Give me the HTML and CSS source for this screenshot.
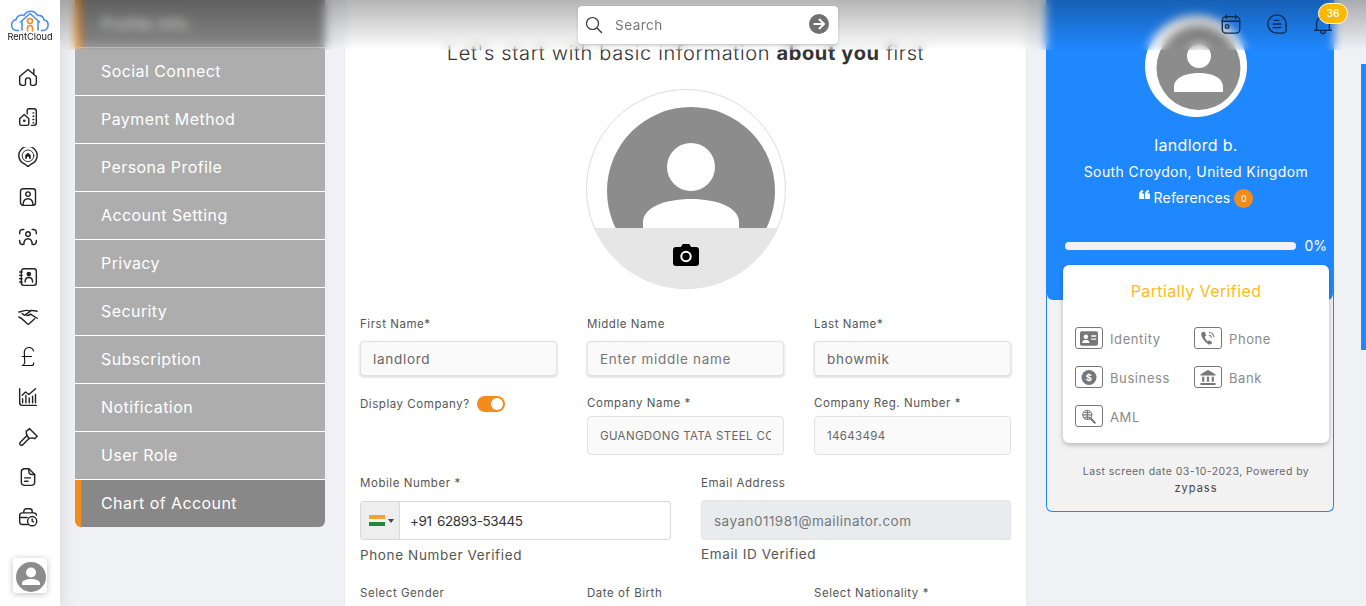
FILE: index.html
```html
<!DOCTYPE html>
<html lang="en">
<head>
<meta charset="utf-8">
<title>RentCloud - Profile</title>
<link rel="stylesheet" href="styles.css">
</head>
<body>
<div class="app">
  <nav class="rail">
    <div class="logo">
      <svg class="logo-mark" viewBox="0 0 40 24"><path class="lg-cloud" d="M9 22H7a5.500 5.500 0 0 1-1-10.900A6 6 0 0 1 14 7a7.500 7.500 0 0 1 13.500 0A6 6 0 0 1 34 11.200 5.500 5.500 0 0 1 33 22h-2"/><path class="lg-cloud" d="M10 14 20 5l10 9M12 13v9M28 13v9"/><circle class="lg-on" cx="20" cy="12.500" r="2.500"/><path class="lg-on" d="M17.500 23v-3.500a2.500 2.500 0 0 1 5 0V23"/></svg>
      <span class="logo-text">RentCloud</span>
    </div>
    <ul class="rail-icons">
      <li><svg class="ico" viewBox="0 0 24 24"><path d="M5 22h2.500a1.500 1.500 0 0 0 1.500-1.500V16a3 3 0 0 1 6 0v4.500a1.500 1.500 0 0 0 1.500 1.500H19a3 3 0 0 0 3-3v-7.500L12 3 2 11.500V19a3 3 0 0 0 3 3zM19 8V2.500"/></svg></li>
      <li><svg class="ico" viewBox="0 0 24 24"><path d="M11 8V4a2 2 0 0 1 2-2h6a3 3 0 0 1 3 3v14a3 3 0 0 1-3 3h-3M18 7h1M18 11h1M18 15h1M18 19h1"/><path d="M2 14l5.500-5 5.500 5v6a2 2 0 0 1-2 2H4a2 2 0 0 1-2-2z"/><circle class="fill" cx="7.500" cy="16.500" r="1.600"/></svg></li>
      <li><svg class="ico" viewBox="0 0 24 24"><path d="M12 23.500l-3.500-2.800A11 11 0 1 1 15.500 20.700z"/><circle class="thin" cx="12" cy="10.500" r="7"/><path class="fill" d="M12 6.800l3.300 2.900V14h-2.100v-2.300h-2.400V14H8.700V9.700z"/></svg></li>
      <li><svg class="ico" viewBox="0 0 24 24"><rect x="3" y="2" width="18" height="20" rx="3"/><circle cx="12" cy="8.500" r="2.700"/><path d="M6 22c0-5 2.500-8 6-8s6 3 6 8"/></svg></li>
      <li><svg class="ico" viewBox="0 0 24 24"><path d="M2 8V6.500A3.500 3.500 0 0 1 5.500 3H7M17 3h1.500A3.500 3.500 0 0 1 22 6.500V8M2 16v1.500A3.500 3.500 0 0 0 5.500 21H6M18 21h.5a3.500 3.500 0 0 0 3.500-3.500V16"/><circle cx="12" cy="8.500" r="2.800"/><path d="M7 21c0-4.500 2-7 5-7s5 2.500 5 7"/></svg></li>
      <li><svg class="ico" viewBox="0 0 24 24"><rect x="4" y="2" width="18" height="20" rx="3"/><path d="M2 6h3M2 10h3M2 14h3M2 18h3"/><circle class="fill" cx="13" cy="8.500" r="2.800"/><path d="M8.500 18c0-3.500 2-5.500 4.500-5.500s4.500 2 4.500 5.500" /></svg></li>
      <li><svg class="ico" viewBox="0 0 24 24"><path d="M1 6c4 0 5-2 9-2 2 0 3 0 5 1l-6 4c1.500 1.500 3.500 1.500 6-.5l8 5M23 5c-3 0-4-1-8-1"/><path d="M1 12c3 1 5 3 7 5l3 3c.8.800 1.600.800 2.400 0L20 14"/><path d="M5 8l3 2"/></svg></li>
      <li class="pound">£</li>
      <li><svg class="ico" viewBox="0 0 24 24"><path d="M2 2v17a3 3 0 0 0 3 3h17"/><path d="M5.500 19v-5M9.500 19v-9M13.500 19v-6M17.500 19v-8M21 19v-10"/><path d="M5 10l4-4 4 3 8-7"/></svg></li>
      <li><svg class="ico" viewBox="0 0 24 24"><path d="M10 5l4-3 9 9-3 3-3-1-4 1-3-6z"/><path d="M10.500 10.500 2.500 18.500a2 2 0 0 0 0 2.500l.5.500a2 2 0 0 0 2.500 0l8-8"/></svg></li>
      <li><svg class="ico" viewBox="0 0 24 24"><path d="M13 2H8a4 4 0 0 0-4 4v12a4 4 0 0 0 4 4h8a4 4 0 0 0 4-4V9z"/><path d="M13 2v3a4 4 0 0 0 4 4h3M8 13h7M8 17h4"/></svg></li>
      <li><svg class="ico" viewBox="0 0 24 24"><path d="M12 21H5a3 3 0 0 1-3-3V10a3 3 0 0 1 3-3h14a3 3 0 0 1 3 3M7 7V5a3 3 0 0 1 3-3h4a3 3 0 0 1 3 3v2M2 12.500h9"/><circle cx="17" cy="17" r="5.500"/><path d="M17 14.500V17l1.800 1"/></svg></li>
    </ul>
    <div class="rail-user">
      <svg class="user-svg" viewBox="0 0 30 30"><circle class="u-bg" cx="15" cy="15" r="15"/><circle class="u-fg" cx="15" cy="10.500" r="5"/><path class="u-fg" d="M6 23v-1.500c0-3 4-4.500 9-4.500s9 1.500 9 4.500V23z"/></svg>
    </div>
  </nav>

  <div class="workspace">
    <aside class="menu">
      <a class="menu-item is-active">Profile Info</a>
      <a class="menu-item">Social Connect</a>
      <a class="menu-item">Payment Method</a>
      <a class="menu-item">Persona Profile</a>
      <a class="menu-item">Account Setting</a>
      <a class="menu-item">Privacy</a>
      <a class="menu-item">Security</a>
      <a class="menu-item">Subscription</a>
      <a class="menu-item">Notification</a>
      <a class="menu-item">User Role</a>
      <a class="menu-item is-active is-last">Chart of Account</a>
    </aside>

    <main class="card">
      <h2 class="intro">Let's start with basic information <b>about you</b> first</h2>
      <div class="photo">
        <svg class="photo-svg" viewBox="0 0 168 168"><circle class="p-bg" cx="84" cy="84" r="84"/><circle class="p-fg" cx="84" cy="60" r="24"/><path class="p-fg" d="M36 122v-7c0-14 21-23 48-23s48 9 48 23v7z"/></svg>
        <div class="photo-bar">
          <svg class="camera" viewBox="0 0 26 22"><path d="M8 3l1-2a1.500 1.500 0 0 1 1.300-1h5.400A1.500 1.500 0 0 1 17 1l1 2h5a3 3 0 0 1 3 3v13a3 3 0 0 1-3 3H3a3 3 0 0 1-3-3V6a3 3 0 0 1 3-3z"/><circle class="cam-ring" cx="13" cy="12.500" r="4.700"/></svg>
        </div>
      </div>

      <div class="row three r1">
        <div class="field"><label class="lbl">First Name*</label><input class="inp raised" value="landlord" readonly></div>
        <div class="field"><label class="lbl">Middle Name</label><input class="inp raised" placeholder="Enter middle name" readonly></div>
        <div class="field"><label class="lbl">Last Name*</label><input class="inp raised" value="bhowmik" readonly></div>
      </div>

      <div class="row three r2">
        <div class="field toggle-field"><label class="lbl">Display Company?</label><span class="toggle"><span class="knob"></span></span></div>
        <div class="field"><label class="lbl">Company Name *</label><input class="inp tall small" value="GUANGDONG TATA STEEL COMPANY" readonly></div>
        <div class="field"><label class="lbl">Company Reg. Number *</label><input class="inp tall small" value="14643494" readonly></div>
      </div>

      <div class="row two r3">
        <div class="field">
          <label class="lbl">Mobile Number *</label>
          <div class="phone">
            <span class="dial"><span class="flag"><i class="f-o"></i><i class="f-w"></i><i class="f-g"></i></span><span class="caret"></span></span>
            <span class="phone-num">+91 62893-53445</span>
          </div>
          <p class="verified">Phone Number Verified</p>
        </div>
        <div class="field">
          <label class="lbl">Email Address</label>
          <div class="email">sayan011981@mailinator.com</div>
          <p class="verified email-note">Email ID Verified</p>
        </div>
      </div>

      <div class="row three r4">
        <div class="field"><label class="lbl">Select Gender</label></div>
        <div class="field"><label class="lbl">Date of Birth</label></div>
        <div class="field"><label class="lbl">Select Nationality *</label></div>
      </div>
    </main>

    <aside class="panel">
      <div class="panel-head">
        <svg class="panel-avatar" viewBox="0 0 102 102"><circle class="pa-ring" cx="51" cy="51" r="51"/><circle class="p-bg" cx="53.500" cy="53" r="42"/><circle class="p-fg" cx="54" cy="41" r="12"/><path class="p-fg" d="M29 77v-5c0-9 11-14 25-14s24 5 24 14v5z"/></svg>
        <div class="p-name">landlord b.</div>
        <div class="p-loc">South Croydon, United Kingdom</div>
        <div class="p-ref">
          <svg class="quote" viewBox="0 0 12 10"><path d="M0 10V5c0-3 1.500-4.500 4.500-5v2C3.500 2.300 3 3 3 4h2.500v6zM6.500 10V5c0-3 1.500-4.500 4.500-5v2c-1 .3-1.500 1-1.500 2H12v6z"/></svg>
          <span>References</span><span class="ref-count">0</span>
        </div>
        <div class="progress"><span class="bar"></span><span class="pct">0%</span></div>
      </div>
      <section class="verify">
        <h3 class="verify-title">Partially Verified</h3>
        <div class="verify-grid">
          <div class="v-item"><span class="v-box"><svg class="v-ico" viewBox="0 0 20 16"><path d="M2 0h16a2 2 0 0 1 2 2v12a2 2 0 0 1-2 2H2a2 2 0 0 1-2-2V2a2 2 0 0 1 2-2z"/><circle class="v-w" cx="6.500" cy="6" r="2.500"/><path class="v-w" d="M2.500 13c0-2.500 2-3.500 4-3.500s4 1 4 3.500zM12.500 4.500H18V6h-5.500zM12.500 8H18v1.500h-5.500z"/></svg></span><span class="v-label">Identity</span></div>
          <div class="v-item"><span class="v-box"><svg class="v-ico" viewBox="0 0 20 18"><path d="M4.500 1 2 2.500C1 6 5 13 11.500 16.500l3-1.500.5-1.500-3.500-2.500-2 1.500C8 11 6.500 9 6 7l2-1.500L6 1z"/><path class="v-line" d="M11 1.500a6 6 0 0 1 6 6M11 5a3 3 0 0 1 3 3"/></svg></span><span class="v-label">Phone</span></div>
          <div class="v-item"><span class="v-box"><svg class="v-ico" viewBox="0 0 16 16"><circle cx="8" cy="8" r="8"/><text class="v-dollar" x="8" y="11.500" text-anchor="middle">$</text></svg></span><span class="v-label">Business</span></div>
          <div class="v-item"><span class="v-box"><svg class="v-ico" viewBox="0 0 20 18"><path d="M10 0l9 5v1.500H1V5zM3 8h2.500v6H3zM8.700 8h2.600v6H8.700zM14.500 8H17v6h-2.500zM1 15.500h18V18H1z"/></svg></span><span class="v-label">Bank</span></div>
          <div class="v-item"><span class="v-box"><svg class="v-ico" viewBox="0 0 20 18"><circle class="v-line" cx="8" cy="7" r="5.500"/><path class="v-line" d="M2.500 7h11M8 1.500v11M4.500 3.500c2.500 1.500 4.500 1.500 7 0M4.500 10.500c2.500-1.500 4.500-1.500 7 0"/><path class="v-thick" d="M12 11.500l5 5"/></svg></span><span class="v-label">AML</span></div>
        </div>
      </section>
      <footer class="panel-foot">
        <p class="foot-line">Last screen date 03-10-2023, Powered by</p>
        <p class="foot-brand">zypass</p>
      </footer>
    </aside>
  </div>

  <header class="topbar">
    <div class="search">
      <svg class="s-ico" viewBox="0 0 18 18"><circle cx="7.500" cy="7.500" r="6"/><path d="M12 12l5 5"/></svg>
      <span class="s-text">Search</span>
      <svg class="s-go" viewBox="0 0 20 20"><circle cx="10" cy="10" r="10"/><path d="M4.500 10h10M10 5l5 5-5 5"/></svg>
    </div>
    <div class="top-icons">
      <svg class="t-ico" viewBox="0 0 24 24"><rect x="2.500" y="4" width="19" height="18" rx="4"/><path d="M7 2v4M17 2v4M2.500 9h19"/><rect x="6" y="13" width="3.500" height="3.500" rx=".8"/></svg>
      <svg class="t-ico" viewBox="0 0 24 24"><path d="M12 2a10 10 0 1 0 0 20h6a4 4 0 0 0 4-4v-6A10 10 0 0 0 12 2z"/><path d="M9 8h5M8 12h8M8 16h8"/></svg>
      <span class="bell">
        <svg class="t-ico" viewBox="0 0 24 24"><path d="M5 18V11a7 7 0 0 1 14 0v7l2 1H3zM9.500 20a2.500 2.500 0 0 0 5 0"/></svg>
        <span class="badge">36</span>
      </span>
    </div>
  </header>
  <span class="thumb"></span>
</div>
</body>
</html>
```

FILE: styles.css
```css
* { box-sizing: border-box; }
html, body { margin: 0; height: 100%; overflow: hidden; }
body { font-family: Inter, "Open Sans", sans-serif; background: #eff1f5; color: #555; }
p, h2, h3, ul { margin: 0; padding: 0; }
ul { list-style: none; }

.app { position: relative; display: flex; width: 1366px; height: 606px; overflow: hidden; }

/* left rail */
.rail { position: relative; z-index: 3; flex: 0 0 60px; display: flex; flex-direction: column; background: #fff; box-shadow: 4px 0 14px rgba(0,0,0,.08); }
.logo { height: 67px; padding-top: 8px; width: 60px; display: flex; flex-direction: column; align-items: center; }
.logo-mark { width: 40px; height: 25px; }
.lg-cloud { fill: none; stroke: #4a8df0; stroke-width: 1.6; }
.lg-on { fill: none; stroke: #f28c1c; stroke-width: 1.6; }
.logo-text { font-size: 9.200px; line-height: 10px; color: #111; margin-top: -1px; }
.rail-icons { display: flex; flex-direction: column; gap: 20px; padding-left: 18px; }
.rail-icons li { width: 20px; height: 20px; }
.ico { display: block; width: 20px; height: 20px; fill: none; stroke: #222; stroke-width: 1.700; stroke-linecap: round; stroke-linejoin: round; }
.ico .fill { fill: #222; stroke: none; }
.ico .thin { stroke-width: 1.100; }
.pound { font-size: 26px; font-weight: 200; line-height: 20px; text-align: center; color: #111; }
.rail-user { margin: auto 0 13px 13px; width: 34px; height: 35px; background: #fff; border-radius: 3px; box-shadow: 0 1px 6px rgba(0,0,0,.25); padding: 4px 0 0 3px; }
.user-svg { display: block; width: 30px; height: 30px; }
.u-bg { fill: #8c8c8c; }
.u-fg { fill: #fff; }

/* workspace */
.workspace { flex: 1; display: flex; align-items: flex-start; gap: 20px; padding-left: 15px; }

.menu { flex: 0 0 250px; display: flex; flex-direction: column; }
.menu-item { display: flex; align-items: center; height: 48px; padding: 0 0 1px 26px; font-size: 16px; letter-spacing: .42px; color: #fff; background: #adadad; border-bottom: 1px solid #fff; }
.menu-item.is-active { background: #888; border-left: 6px solid #f28c1c; padding-left: 20px; }
.menu-item.is-last { height: 47px; border-bottom: 0; border-radius: 0 0 6px 6px; }

.card { flex: 0 0 681px; height: 606px; padding: 41px 15px 0; background: #fff; box-shadow: 0 0 0 1px #e8eaee; }
.intro { font-size: 20px; line-height: 24px; font-weight: 300; text-align: center; color: #333; letter-spacing: .65px; white-space: nowrap; }
.intro b { font-weight: 700; }

.photo { position: relative; width: 200px; height: 200px; margin: 24px 0 28px 226px; border: 1px solid #ddd; border-radius: 50%; overflow: hidden; background: #fff; }
.photo-svg { display: block; width: 168px; height: 168px; margin: 17px 0 0 20px; }
.p-bg { fill: #8c8c8c; }
.p-fg { fill: #fff; }
.photo-bar { position: absolute; left: 0; right: 0; bottom: 0; height: 60px; background: #e6e6e6; }
.camera { position: absolute; left: 86px; top: 16px; width: 26px; height: 22px; fill: #000; }
.cam-ring { fill: #000; stroke: #fff; stroke-width: 2; }

.row { display: grid; column-gap: 30px; }
.three { grid-template-columns: repeat(3, 197px); }
.two { grid-template-columns: 311px 310px; }
.r2 { margin-top: 20px; }
.r3 { margin-top: 21px; }
.r4 { margin-top: 23px; }
.field { display: flex; flex-direction: column; }
.lbl { display: block; font-size: 11.500px; line-height: 14px; color: #555; letter-spacing: .55px; white-space: nowrap; }
.inp { display: block; width: 100%; font: inherit; color: #666; font-size: 13.500px; letter-spacing: .72px; height: 35px; padding: 0 12px; background: #fafafa; border: 1px solid #e2e2e2; border-radius: 4px; outline: 0; }
.inp::placeholder { color: #777; opacity: 1; }
.raised { margin-top: 10px; box-shadow: 0 1px 3px rgba(0,0,0,.18); }
.tall { margin-top: 6px; height: 39px; }
.small { font-size: 11.500px; letter-spacing: .35px; }
.toggle-field { flex-direction: row; align-items: center; align-self: start; gap: 7px; }
.toggle { display: block; width: 28px; height: 16px; background: #f28c1c; border-radius: 8px; padding: 2px 2px 2px 14px; }
.knob { display: block; width: 12px; height: 12px; background: #fff; border-radius: 50%; }

.phone { display: flex; align-items: center; height: 39px; margin-top: 11px; background: #fff; border: 1px solid #d9d9d9; border-radius: 3px; }
.dial { display: flex; align-items: center; gap: 3px; width: 39px; height: 100%; padding-left: 8px; background: #eee; border-right: 1px solid #d9d9d9; }
.flag { display: flex; flex-direction: column; width: 16px; height: 11px; }
.flag i { flex: 1; }
.f-o { background: #f7a133; }
.f-w { background: #f4f4f4; }
.f-g { background: #1f8a3b; }
.caret { width: 0; height: 0; border: 3px solid transparent; border-top: 4px solid #444; border-bottom: 0; }
.phone-num { padding-left: 10px; font-size: 13.500px; letter-spacing: -.4px; word-spacing: 2px; color: #333; }
.email { height: 40px; margin-top: 10px; padding-left: 12px; line-height: 40px; font-size: 13.500px; letter-spacing: .47px; color: #777; background: #e9ecef; border: 1px solid #e2e5e9; border-radius: 3px; }
.verified { margin-top: 7px; font-size: 13.500px; line-height: 16px; letter-spacing: .63px; color: #555; }
.email-note { margin-top: 6px; }

/* right panel */
.panel { flex: 0 0 288px; height: 512px; background: #f2f2f3; border: 1px solid #2088ff; border-top: 0; border-radius: 0 0 6px 6px; }
.panel-head { height: 300px; padding: 15px 0 0 12px; background: #2088ff; border-radius: 0 0 6px 6px; display: flex; flex-direction: column; align-items: center; color: #fff; }
.panel-avatar { display: block; width: 102px; height: 102px; flex: none; }
.pa-ring { fill: #fff; }
.p-name { margin-top: 17px; font-size: 16px; line-height: 22px; letter-spacing: .3px; }
.p-loc { margin-top: 7px; font-size: 14px; line-height: 18px; letter-spacing: .4px; white-space: nowrap; }
.p-ref { display: flex; align-items: center; margin-top: 7px; font-size: 14px; line-height: 20px; letter-spacing: .2px; }
.quote { width: 11px; height: 9px; fill: #fff; margin: -8px 4px 0 0; }
.ref-count { display: block; width: 19px; height: 19px; margin-left: 4px; border-radius: 50%; background: #f28c1c; font-size: 9px; line-height: 19px; text-align: center; }
.progress { align-self: flex-start; display: flex; align-items: center; margin: 30px 0 0 6px; width: 262px; }
.bar { width: 232px; height: 8px; border-radius: 4px; background: #f2f2f2; }
.pct { margin-left: 8px; font-size: 14px; line-height: 16px; }

.verify { position: relative; width: 266px; height: 178px; margin: -35px 0 0 16px; padding: 16px 12px 0; background: #fff; border-radius: 6px; box-shadow: 0 2px 5px rgba(0,0,0,.25); }
.verify-title { font-size: 16px; line-height: 20px; font-weight: 400; text-align: center; color: #fdbb1c; letter-spacing: .4px; }
.verify-grid { display: grid; grid-template-columns: 119px 119px; row-gap: 17px; margin-top: 26px; }
.v-item { display: flex; align-items: center; gap: 7px; height: 22px; font-size: 13px; color: #8a8a8a; letter-spacing: .6px; }
.v-label { padding-top: 2px; }
.v-box { display: flex; align-items: center; justify-content: center; flex: 0 0 28px; height: 22px; border: 1px solid #777; border-radius: 3px; }
.v-ico { width: 18px; height: 15px; fill: #777; }
.v-w { fill: #fff; }
.v-line { fill: none; stroke: #777; stroke-width: 1.300; }
.v-thick { fill: none; stroke: #777; stroke-width: 2.500; stroke-linecap: round; }
.v-dollar { fill: #fff; font-size: 10px; font-weight: 700; }

.panel-foot { padding: 22px 0 0 12px; text-align: center; }
.foot-line { font-size: 10.500px; line-height: 14px; color: #666; letter-spacing: .45px; white-space: nowrap; }
.foot-brand { margin-top: 2px; font-size: 11px; line-height: 14px; color: #444; letter-spacing: 1px; }

/* blurred top bar */
.topbar { position: absolute; z-index: 2; left: 60px; right: 0; top: 0; height: 50px; display: flex; align-items: flex-start; background: linear-gradient(rgba(0,0,0,.29), rgba(0,0,0,0)); -webkit-backdrop-filter: blur(5px); backdrop-filter: blur(5px); }
.search { display: flex; align-items: center; width: 260px; height: 38px; margin: 6px 0 0 518px; padding: 0 9px 0 7px; background: #fff; border-radius: 4px; box-shadow: 0 1px 3px rgba(0,0,0,.2); }
.s-ico { width: 18px; height: 18px; fill: none; stroke: #333; stroke-width: 1.200; }
.s-text { flex: 1; padding-left: 12px; font-size: 13.500px; color: #777; letter-spacing: .5px; }
.s-go { width: 20px; height: 20px; margin-top: -2px; }
.s-go circle { fill: #707070; }
.s-go path { fill: none; stroke: #fff; stroke-width: 2; }
.top-icons { display: flex; align-items: center; gap: 24px; margin: 13px 0 0 382px; }
.t-ico { display: block; width: 22px; height: 22px; fill: none; stroke: #0b2a50; stroke-width: 1.500; stroke-linejoin: round; stroke-linecap: round; }
.bell { position: relative; display: block; width: 22px; height: 22px; }
.badge { position: absolute; left: 6px; top: -10px; width: 30px; height: 21px; border: 1px solid #fff; border-radius: 11px; background: #ffb700; color: #fff; font-size: 10.500px; font-weight: 500; line-height: 19px; text-align: center; }

.thumb { position: absolute; z-index: 1; right: 0; top: 64px; width: 5px; height: 286px; background: #2088ff; }
```
